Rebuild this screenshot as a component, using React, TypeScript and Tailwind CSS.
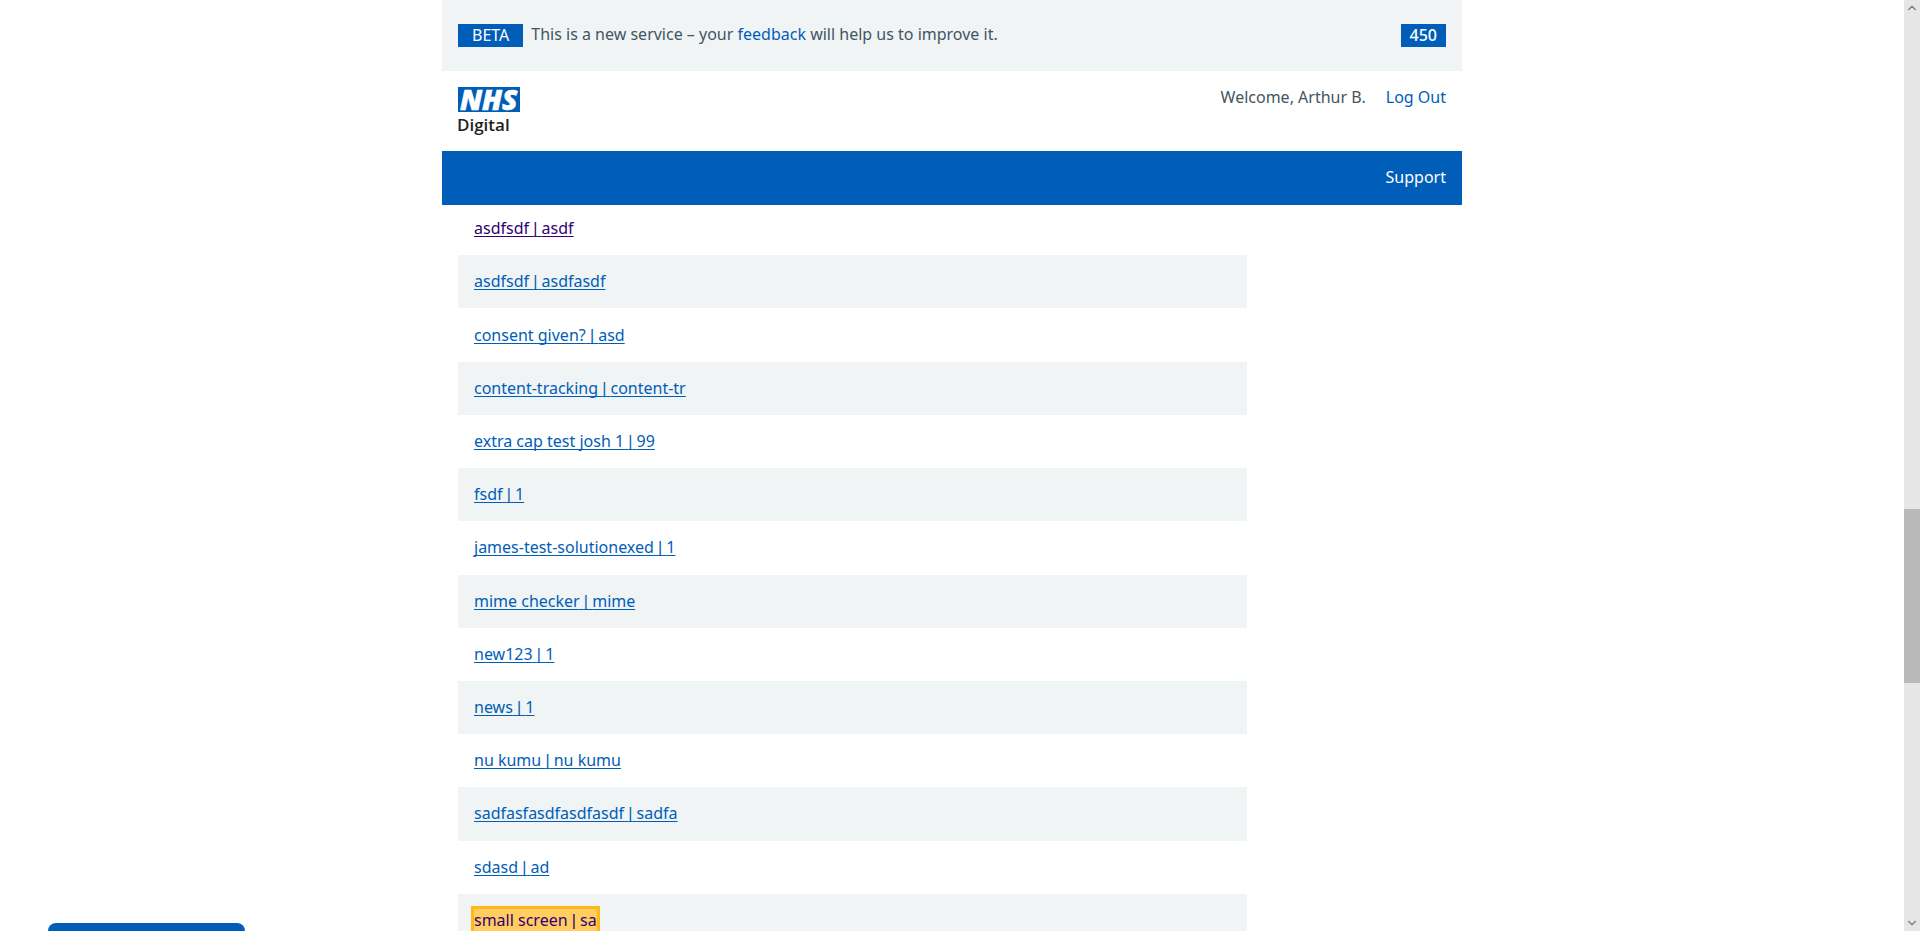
import { ChevronDown, ChevronUp } from "lucide-react";

type Item = { name: string; version: string; state?: "visited" | "focused" };

const items: Item[] = [
  { name: "asdfsdf", version: "asdf", state: "visited" },
  { name: "asdfsdf", version: "asdfasdf" },
  { name: "consent given?", version: "asd" },
  { name: "content-tracking", version: "content-tr" },
  { name: "extra cap test josh 1", version: "99" },
  { name: "fsdf", version: "1" },
  { name: "james-test-solutionexed", version: "1" },
  { name: "mime checker", version: "mime" },
  { name: "new123", version: "1" },
  { name: "news", version: "1" },
  { name: "nu kumu", version: "nu kumu" },
  { name: "sadfasfasdfasdfasdf", version: "sadfa" },
  { name: "sdasd", version: "ad" },
  { name: "small screen", version: "sa", state: "focused" },
];

function linkClass(state: Item["state"]) {
  if (state === "visited")
    return "text-[#330072] underline decoration-1 underline-offset-2 [text-decoration-skip-ink:none]";
  if (state === "focused")
    return "bg-[#ffcd60] text-[#330072] outline-3 outline-[#ffb81c]";
  return "text-[#005eb8] underline decoration-1 underline-offset-2 [text-decoration-skip-ink:none]";
}

function Logo() {
  return (
    <a href="#home" aria-label="NHS Digital" className="block">
      <svg
        width="62"
        height="48"
        viewBox="0 0 62 48"
        className="overflow-visible"
      >
        <rect width="62" height="25" fill="#005eb8" />
        <text
          x="2"
          y="22.5"
          fill="#fff"
          stroke="#fff"
          strokeWidth="0.6"
          fontFamily="'Open Sans', 'Noto Sans', sans-serif"
          fontSize="28"
          fontWeight="800"
          fontStyle="italic"
        >
          NHS
        </text>
        <text
          x="-1"
          y="44"
          fill="#231f20"
          fontFamily="'Open Sans', 'Noto Sans', sans-serif"
          fontSize="17"
          fontWeight="600"
        >
          Digital
        </text>
      </svg>
    </a>
  );
}

function Header() {
  return (
    <header className="relative z-10 bg-white">
      <div className="flex h-[71px] items-start justify-between bg-[#f0f4f5] px-4 pt-6">
        <div className="flex gap-2">
          <strong className="h-[23px] bg-[#005eb8] px-3.5 leading-[23px] font-normal text-white">
            BETA
          </strong>
          <p className="leading-[21px]">
            This is a new service – your{" "}
            <a href="#feedback" className="text-[#005eb8]">
              feedback
            </a>{" "}
            will help us to improve it.
          </p>
        </div>
        <span className="h-[23px] bg-[#005eb8] px-[9px] leading-[23px] font-medium text-white">
          450
        </span>
      </div>
      <div className="flex h-20 items-start justify-between px-4 pt-4">
        <Logo />
        <div className="flex gap-5 leading-[21px]">
          <span>Welcome, Arthur B.</span>
          <a href="#logout" className="text-[#005eb8]">
            Log Out
          </a>
        </div>
      </div>
      <nav className="flex h-[54px] justify-end bg-[#005eb8] px-4 pt-3.5">
        <a href="#support" className="leading-6 text-white">
          Support
        </a>
      </nav>
    </header>
  );
}

function ScrollRail() {
  return (
    <div className="flex w-4 shrink-0 flex-col bg-[#e6e6e6] text-[#7d7d7d]">
      <div className="flex h-4 items-center justify-center">
        <ChevronUp size={14} strokeWidth={2} />
      </div>
      <div className="grow-[493]" />
      <div className="grow-[174] bg-[#b9b9b9]" />
      <div className="grow-[232]" />
      <div className="flex h-4 items-center justify-center">
        <ChevronDown size={14} strokeWidth={2} />
      </div>
    </div>
  );
}

export default function App() {
  return (
    <div className="relative flex h-screen overflow-hidden bg-white font-['Noto_Sans','Open_Sans',sans-serif] text-[16px] text-[#425563]">
      <div className="min-w-0 grow">
        <div className="mx-auto max-w-[1020px]">
          <Header />
          <main className="px-4">
            <ul className="-mt-[3px] grid h-[745px] max-w-[789px] auto-rows-fr">
              {items.map((item) => (
                <li
                  key={`${item.name}-${item.version}`}
                  className="flex items-center px-4 even:bg-[#f0f4f5]"
                >
                  <a
                    href="#item"
                    className={`leading-[22px] ${linkClass(item.state)}`}
                  >
                    {item.name}{" "}
                    <span className="font-['Liberation_Sans',sans-serif]">
                      |
                    </span>{" "}
                    {item.version}
                  </a>
                </li>
              ))}
            </ul>
          </main>
        </div>
      </div>
      <ScrollRail />
      <button
        type="button"
        aria-label="Give feedback"
        className="absolute -bottom-8 left-12 h-10 w-[197px] rounded-lg bg-[#005eb8]"
      />
    </div>
  );
}
